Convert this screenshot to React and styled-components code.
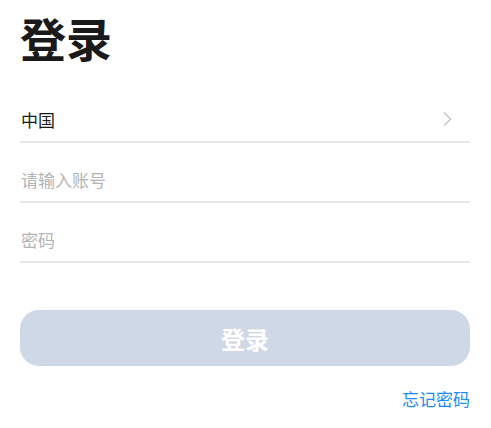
import React from "react";
import styled, { createGlobalStyle } from "styled-components";

const Global = createGlobalStyle`
  html, body { margin: 0; padding: 0; background: #fff; }
  body { font-family: "Noto Sans CJK SC", "Noto Sans", sans-serif; }
  * { box-sizing: border-box; }
`;

const Page = styled.div`
  padding: 0 21px 0 20px;
  display: flex;
  flex-direction: column;
`;

const Title = styled.h1`
  margin: 0;
  padding-top: 6px;
  font-size: 46px;
  line-height: 63px;
  font-weight: 700;
  color: #1a1a1a;
`;

const Form = styled.div`
  margin-top: 14px;
  display: flex;
  flex-direction: column;
`;

const Row = styled.div`
  height: 60px;
  display: flex;
  align-items: center;
  justify-content: space-between;
  border-bottom: 2px solid #e8e8e8;
  padding: 14px 18px 0 1px;
  font-size: 17px;
  color: ${(p) => (p.$placeholder ? "#b4b4b4" : "#1a1a1a")};
`;

const Button = styled.button`
  margin-top: 47px;
  height: 56px;
  width: 100%;
  border: none;
  border-radius: 19px;
  background: #cfd8e6;
  color: #fff;
  font-family: inherit;
  font-size: 24px;
  font-weight: 700;
`;

const Forgot = styled.div`
  align-self: flex-end;
  margin-top: 19px;
  font-size: 17px;
  line-height: 28px;
  color: #1b8cf5;
`;

const Chevron = () => (
  <svg width="10" height="16" viewBox="0 0 10 16" fill="none">
    <path d="M2 1.5 L8.5 8 L2 14.5" stroke="#c4c4c4" strokeWidth="1.4" />
  </svg>
);

export default function App() {
  return (
    <>
      <Global />
      <Page>
        <Title>登录</Title>
        <Form>
          <Row>
            <span>中国</span>
            <Chevron />
          </Row>
          <Row $placeholder>请输入账号</Row>
          <Row $placeholder>密码</Row>
        </Form>
        <Button>登录</Button>
        <Forgot>忘记密码</Forgot>
      </Page>
    </>
  );
}
